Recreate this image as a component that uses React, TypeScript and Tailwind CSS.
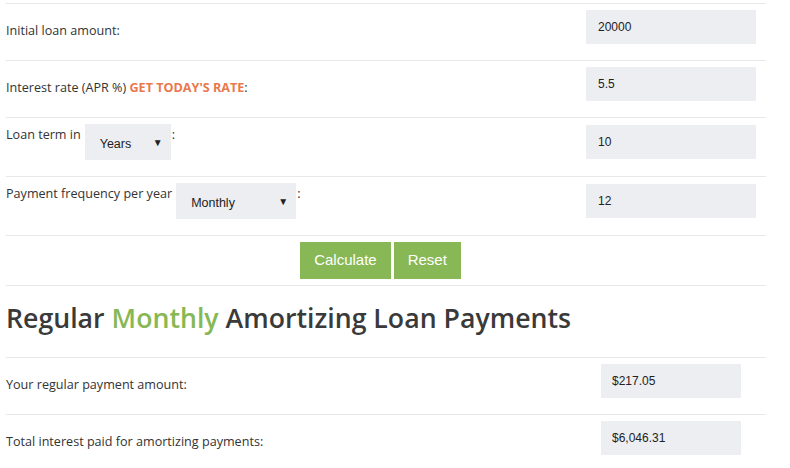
import { ReactNode } from "react";

const label = "font-['Open_Sans',sans-serif] text-[12.6px] leading-[18px] text-[#333]";
const field =
  "w-[170px] h-[34px] bg-[#edeef2] pl-[12px] flex items-center font-['Liberation_Sans',Arial,sans-serif] text-[12px] text-[#222]";

const FakeSelect = ({ value, width }: { value: string; width: string }) => (
  <div
    className={`${width} h-[36px] bg-[#edeef2] pl-[15px] pr-[8px] flex items-center justify-between font-['Liberation_Sans',Arial,sans-serif] text-[12.5px] leading-[14px] text-[#222]`}
  >
    <span className="mt-[3px]">{value}</span>
    <span className="text-[10px] mt-[1px]">▼</span>
  </div>
);

const Row = ({ left, right, labelTop }: { left: ReactNode; right: ReactNode; labelTop: string }) => (
  <div className="flex justify-between items-start border-t border-[#e8e8e8] pt-[6px] pb-[16px]">
    <div className={`${label} ${labelTop}`}>{left}</div>
    <div className="mr-[10px]">{right}</div>
  </div>
);

const ResultRow = ({ text, value }: { text: string; value: string }) => (
  <div className="flex justify-between items-start border-t border-[#e8e8e8] pt-[6px] pb-[16px]">
    <div className={`${label} mt-[12px]`}>{text}</div>
    <div className="mr-[25px] w-[140px] h-[34px] bg-[#edeef2] pl-[11px] flex items-center font-['Liberation_Sans',Arial,sans-serif] text-[12px] text-[#222]">
      {value}
    </div>
  </div>
);

export default function App() {
  return (
    <div className="w-[790px] h-[468px] overflow-hidden bg-white pt-[3px]">
      <div className="ml-[6px] w-[760px]">
        <Row labelTop="mt-[12px]" left="Initial loan amount:" right={<div className={field}>20000</div>} />
        <Row
          labelTop="mt-[12px]"
          left={
            <>
              Interest rate (APR %){" "}
              <span className="font-bold text-[#e9784c]">GET TODAY'S RATE</span>:
            </>
          }
          right={<div className={field}>5.5</div>}
        />
        <Row
          labelTop=""
          left={
            <div className="flex items-start">
              <span className="mt-[2px] mr-[4px]">Loan term in</span>
              <FakeSelect value="Years" width="w-[86px]" />
              <span className="mt-[2px] ml-[1px]">:</span>
            </div>
          }
          right={<div className={`${field} mt-[1px]`}>10</div>}
        />
        <Row
          labelTop=""
          left={
            <div className="flex items-start">
              <span className="mt-[2px] mr-[4px]">Payment frequency per year</span>
              <FakeSelect value="Monthly" width="w-[120px]" />
              <span className="mt-[2px] ml-[1px]">:</span>
            </div>
          }
          right={<div className={`${field} mt-[1px]`}>12</div>}
        />

        {/* Buttons */}
        <div className="flex justify-center gap-[3px] border-t border-[#e8e8e8] pt-[6px] pb-[6px] pr-[11px]">
          <button className="h-[37px] px-[14px] bg-[#87b855] text-white text-[15px] font-['Liberation_Sans',Arial,sans-serif]">
            Calculate
          </button>
          <button className="h-[37px] px-[14px] bg-[#87b855] text-white text-[15px] font-['Liberation_Sans',Arial,sans-serif]">
            Reset
          </button>
        </div>

        <div className="border-t border-[#e8e8e8] pt-[14px] pb-[21px]">
          <h2 className="font-['Open_Sans',sans-serif] font-semibold text-[26.7px] leading-[36px] text-[#3a3a3a]">
            Regular <span className="text-[#87b855]">Monthly</span> Amortizing Loan Payments
          </h2>
        </div>

        <ResultRow text="Your regular payment amount:" value="$217.05" />
        <ResultRow text="Total interest paid for amortizing payments:" value="$6,046.31" />
      </div>
    </div>
  );
}
